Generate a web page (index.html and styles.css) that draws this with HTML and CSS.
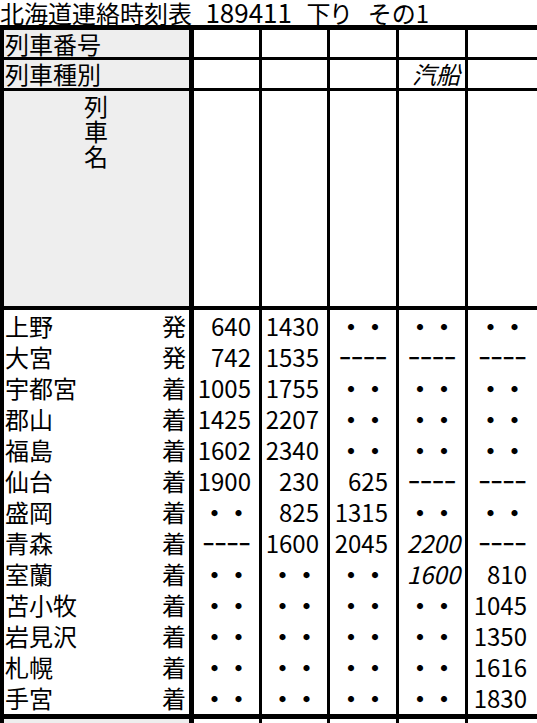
FILE: index.html
```html
<!DOCTYPE html>
<html lang="ja">
<head>
<meta charset="utf-8">
<title>北海道連絡時刻表 189411 下り その1</title>
<link rel="stylesheet" href="styles.css">
</head>
<body>
<div class="title"><span>北海道連絡時刻表</span> <span class="tnum">189411</span> <span class="tdir">下り</span> <span class="tpart">その1</span></div>
<div class="grid">
  <div class="row hdr"><div>列車番号</div><div></div><div></div><div></div><div></div><div></div></div>
  <div class="row hdr"><div>列車種別</div><div></div><div></div><div></div><div class="i">汽船</div><div></div></div>
  <div class="row name"><div><span class="vert">列車名</span></div><div></div><div></div><div></div><div></div><div></div></div>

  <div class="row"><div><span>上野</span><span>発</span></div><div>640</div><div>1430</div><div class="m d">・・</div><div class="m d">・・</div><div class="m d">・・</div></div>
  <div class="row"><div><span>大宮</span><span>発</span></div><div>742</div><div>1535</div><div class="m">ｰｰｰｰ</div><div class="m">ｰｰｰｰ</div><div class="m">ｰｰｰｰ</div></div>
  <div class="row"><div><span>宇都宮</span><span>着</span></div><div>1005</div><div>1755</div><div class="m d">・・</div><div class="m d">・・</div><div class="m d">・・</div></div>
  <div class="row"><div><span>郡山</span><span>着</span></div><div>1425</div><div>2207</div><div class="m d">・・</div><div class="m d">・・</div><div class="m d">・・</div></div>
  <div class="row"><div><span>福島</span><span>着</span></div><div>1602</div><div>2340</div><div class="m d">・・</div><div class="m d">・・</div><div class="m d">・・</div></div>
  <div class="row"><div><span>仙台</span><span>着</span></div><div>1900</div><div>230</div><div>625</div><div class="m">ｰｰｰｰ</div><div class="m">ｰｰｰｰ</div></div>
  <div class="row"><div><span>盛岡</span><span>着</span></div><div class="m d">・・</div><div>825</div><div>1315</div><div class="m d">・・</div><div class="m d">・・</div></div>
  <div class="row"><div><span>青森</span><span>着</span></div><div class="m">ｰｰｰｰ</div><div>1600</div><div>2045</div><div class="i">2200</div><div class="m">ｰｰｰｰ</div></div>
  <div class="row"><div><span>室蘭</span><span>着</span></div><div class="m d">・・</div><div class="m d">・・</div><div class="m d">・・</div><div class="i">1600</div><div>810</div></div>
  <div class="row"><div><span>苫小牧</span><span>着</span></div><div class="m d">・・</div><div class="m d">・・</div><div class="m d">・・</div><div class="m d">・・</div><div>1045</div></div>
  <div class="row"><div><span>岩見沢</span><span>着</span></div><div class="m d">・・</div><div class="m d">・・</div><div class="m d">・・</div><div class="m d">・・</div><div>1350</div></div>
  <div class="row"><div><span>札幌</span><span>着</span></div><div class="m d">・・</div><div class="m d">・・</div><div class="m d">・・</div><div class="m d">・・</div><div>1616</div></div>
  <div class="row last"><div><span>手宮</span><span>着</span></div><div class="m d">・・</div><div class="m d">・・</div><div class="m d">・・</div><div class="m d">・・</div><div>1830</div></div>

  <div class="row next"><div></div><div></div><div></div><div></div><div></div><div></div></div>
</div>
</body>
</html>
```

FILE: styles.css
```css
* {
  box-sizing: border-box;
}

html,
body {
  overflow: hidden;
}

body {
  margin: 0;
  width: 537px;
  background: #fff;
  color: #000;
  font-family: "Noto Sans CJK JP", "Noto Sans", sans-serif;
}

.title {
  height: 25px;
  font-size: 24px;
  line-height: 20px;
  padding-top: 2px;
  white-space: nowrap;
}

.title .tnum {
  margin-left: 8px;
  font-size: 26px;
}

.title .tdir {
  margin-left: 9px;
  font-feature-settings: "palt";
}

.title .tpart {
  margin-left: 12px;
}

.grid {
  display: grid;
  grid-template-columns: 194px 68px 68px 69px 69px 69px;
  grid-template-rows: 30px 31px 219px repeat(12, 31px) 37px 30px;
  border-top: 5px solid #000;
  font-size: 24px;
  line-height: 24px;
}

.row {
  display: contents;
}

.row > div {
  display: flex;
  align-items: center;
  justify-content: flex-end;
  padding-right: 8px;
  border-right: 3px solid #000;
  white-space: nowrap;
}

.row > div:first-child {
  justify-content: space-between;
  padding: 0 3px 0 1px;
  border-left: 4px solid #000;
  border-right-width: 5px;
}

.row > div:last-child {
  border-right: 0;
  padding-right: 10px;
}

.row > div.m {
  justify-content: center;
  padding-right: 0;
}

.row > div.d {
  font-weight: 700;
}

.row > div.i {
  font-style: italic;
  padding-right: 5px;
}

.hdr > div {
  border-bottom: 3px solid #000;
}

.hdr > div:first-child {
  justify-content: flex-start;
}

.hdr > div:first-child,
.name > div:first-child,
.next > div:first-child {
  background: #eeeeee;
}

.name > div {
  border-bottom: 4px solid #000;
}

.name > div:first-child {
  align-items: flex-start;
  justify-content: center;
}

.vert {
  writing-mode: vertical-rl;
  letter-spacing: 1px;
  margin-top: 4px;
}

.last > div {
  border-bottom: 5px solid #000;
}
```
